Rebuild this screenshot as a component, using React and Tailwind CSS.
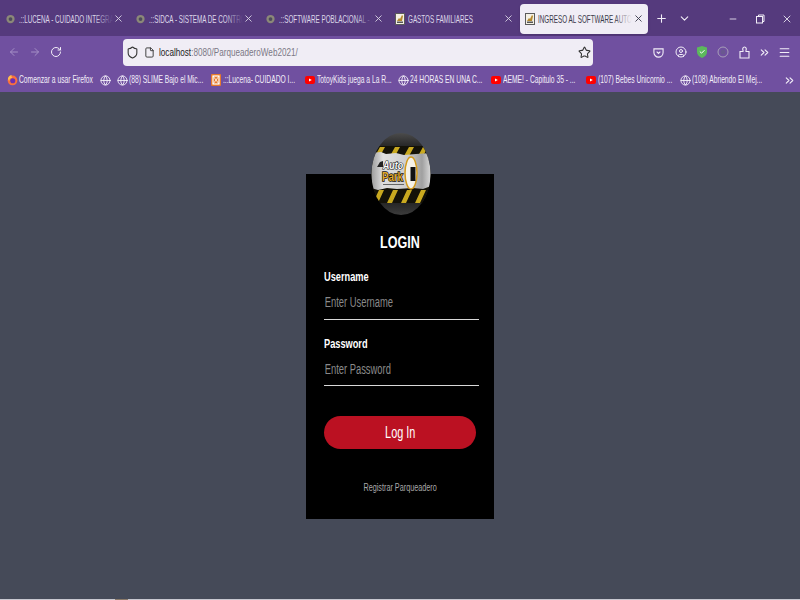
import React from "react";
import { ArrowLeft, ArrowRight, RotateCw, Shield, File, Star, X, Plus, ChevronDown, Minus, ChevronsRight, Menu, Globe, CircleUser } from "lucide-react";

const font = { fontFamily: '"Liberation Sans", Arial, sans-serif' };

const Sq = ({ children, className = "scale-x-[0.7]" }) => (
  <span className={"block whitespace-nowrap origin-left " + className}>{children}</span>
);

const GreyIcon = () => (
  <svg width="9" height="10" viewBox="0 0 12 12" className="shrink-0">
    <circle cx="6" cy="6" r="5.500" fill="#8b8878" />
    <circle cx="6" cy="6" r="2.500" fill="#4d4a5c" />
  </svg>
);

const PicIcon = () => (
  <svg width="10" height="12" viewBox="0 0 10 12" className="shrink-0">
    <rect x="0.500" y="0.500" width="9" height="11" fill="#f4f0e4" stroke="#5b5b5b" />
    <path d="M2 8l2-3 1 1 2-4 1 1-1 5z" fill="#b5892d" />
    <rect x="2" y="8.500" width="6" height="1.500" fill="#555" />
  </svg>
);

const YtIcon = () => (
  <svg width="10" height="10" viewBox="0 0 10 10" className="shrink-0">
    <rect x="0" y="1" width="10" height="8" rx="2" fill="#f00" />
    <path d="M4 3.400v3.200L6.800 5z" fill="#fff" />
  </svg>
);

const FoxIcon = () => (
  <svg width="11" height="12" viewBox="0 0 12 12" className="shrink-0">
    <circle cx="6" cy="6.500" r="5.300" fill="#f9703e" />
    <circle cx="6.300" cy="6.800" r="2.800" fill="#6b2fb3" />
    <path d="M1 4C2 1.500 4 .5 5 .5 4.600 2 5 3 6 3.600 4 3.600 2.600 4.600 2.600 7 1.600 6.400 1 5.200 1 4z" fill="#ffbd4f" />
  </svg>
);

const LucIcon = () => (
  <svg width="10" height="12" viewBox="0 0 10 12" className="shrink-0">
    <rect width="10" height="12" rx="1" fill="#e8792b" />
    <rect x="2" y="2" width="6" height="8" fill="none" stroke="#fff" strokeWidth="1.200" />
    <path d="M2 2l6 8M8 2l-6 8" stroke="#fff" strokeWidth="0.800" />
  </svg>
);

const Tab = ({ icon, title, fade, active, pic }) => (
  <div className={"relative flex items-center h-[30px] shrink-0 " + (active ? "w-[128px] bg-[#f0edf5] rounded-[4px] text-[#3a3a4a] shadow-sm" : "w-[130px] text-[#dcd6e8]")}>
    <div className={pic ? "ml-[5px] mr-[3px] w-[10px] flex shrink-0" : "ml-[6px] mr-[4px] w-[9px] flex shrink-0"}>{icon}</div>
    <div className="relative w-[94px] overflow-hidden text-[10.5px] h-[14px] leading-[14px]">
      <Sq className="scale-x-[0.6]">{title}</Sq>
      {fade && <div className={"absolute right-0 top-0 h-full w-[18px] bg-gradient-to-r " + fade} />}
    </div>
    <X size={11} className={"shrink-0 " + (pic ? "ml-[1px] " : "") + (active ? "text-[#3a3a4a]" : "text-[#d8d2e4]")} />
  </div>
);

const Bm = ({ icon, text, w }) => (
  <div className="flex items-center shrink-0" style={{ width: w }}>
    <div className="w-[12px] flex justify-start shrink-0">{icon}</div>
    {text && <span className="block w-0 text-[10.5px] text-[#f2eef8]"><Sq className="scale-x-[0.64]">{text}</Sq></span>}
  </div>
);

const G = () => <Globe size={11} className="text-[#f2eef8] shrink-0" />;

const Logo = () => (
  <svg viewBox="0 0 60 82" className="w-[60px] h-[82px]">
    <defs>
      <clipPath id="ov"><ellipse cx="30" cy="41" rx="29.500" ry="41" /></clipPath>
      <linearGradient id="metal" x1="0" x2="1" y1="0" y2="0">
        <stop offset="0" stopColor="#9a9a9a" />
        <stop offset="0.2" stopColor="#e0e0e0" />
        <stop offset="0.6" stopColor="#cdcdcd" />
        <stop offset="0.85" stopColor="#a0a0a0" />
        <stop offset="1" stopColor="#dadada" />
      </linearGradient>
      <linearGradient id="top" x1="0" x2="0" y1="0" y2="1">
        <stop offset="0" stopColor="#4b4b4b" />
        <stop offset="0.2" stopColor="#1e1e1e" />
        <stop offset="0.8" stopColor="#1e1e1e" />
        <stop offset="1" stopColor="#3c3c3c" />
      </linearGradient>
    </defs>
    <g clipPath="url(#ov)">
      <rect width="60" height="82" fill="url(#top)" />
      <rect y="13" width="60" height="57" fill="#141208" />
      <g fill="#c9a91f">
        <path d="M4 23l5-9h5l-5 9zM19 23l5-9h5l-5 9zM33 23l5-9h5l-5 9zM47 23l5-9h5l-5 9z" />
        <path d="M2 70l6-13h5l-6 13zM16 70l6-13h5l-6 13zM30 70l6-13h5l-6 13zM44 70l6-13h5l-6 13z" />
      </g>
      <path d="M0 20l10-1 5 2 10-1 8 2 12-1 15-1v33l-8 3-10-1-16 1-10-1-9 2-7-2z" fill="url(#metal)" />
      <path d="M6 34l3-5 3-1v6z" fill="#222" />
      <text x="12" y="36" fontSize="10" fontWeight="700" fill="#fff" stroke="#111" strokeWidth="1.200" paintOrder="stroke" fontStyle="italic" textLength="20" lengthAdjust="spacingAndGlyphs" style={font}>Auto</text>
      <text x="11" y="48" fontSize="12" fontWeight="700" fill="#e0a82a" stroke="#111" strokeWidth="1.500" paintOrder="stroke" textLength="21" lengthAdjust="spacingAndGlyphs" style={font}>Park</text>
      <ellipse cx="40" cy="40" rx="6" ry="16" fill="#f5f2e8" stroke="#d39b1c" strokeWidth="1.500" />
      <rect x="39.500" y="34" width="5" height="14" fill="#111" />
      <rect x="12" y="51" width="21" height="1" fill="#666" />
    </g>
  </svg>
);

export default function App() {
  return (
    <div className="w-[800px] h-[600px] overflow-hidden flex flex-col bg-[#454a58]" style={font}>
      {/* Tab strip */}
      <div className="h-[36px] bg-[#553a7d] flex items-center pt-[1px] shrink-0">
        <Tab icon={<GreyIcon />} title=".::LUCENA - CUIDADO INTEGRAL" fade="from-transparent to-[#553a7d]" />
        <Tab icon={<GreyIcon />} title=".::SIDCA - SISTEMA DE CONTROL" fade="from-transparent to-[#553a7d]" />
        <Tab icon={<GreyIcon />} title=".::SOFTWARE POBLACIONAL - SISTEMA" fade="from-transparent to-[#553a7d]" />
        <Tab icon={<PicIcon />} pic title="GASTOS FAMILIARES" />
        <Tab icon={<PicIcon />} pic title="INGRESO AL SOFTWARE AUTOPARK" fade="from-transparent to-[#f0edf5]" active />
        <Plus size={13} className="text-[#f2eef8] ml-[7px] shrink-0" />
        <ChevronDown size={13} className="text-[#f2eef8] ml-[10px] shrink-0" />
        <Minus size={10} className="text-[#f2eef8] ml-[37px] shrink-0" />
        <svg width="10" height="10" viewBox="0 0 10 10" className="ml-[17px] shrink-0 text-[#f2eef8]" fill="none" stroke="currentColor"><rect x="1.500" y="2.500" width="6" height="6.500" /><path d="M3.500 2.500V1H9v6.500H7.500" /></svg>
        <X size={12} className="text-[#d8d2e4] ml-[16px] shrink-0" />
      </div>

      {/* Nav bar */}
      <div className="h-[32px] bg-[#7050a0] flex items-center shrink-0">
        <ArrowLeft size={12} className="text-[#a48fc6] ml-[8px]" />
        <ArrowRight size={12} className="text-[#a48fc6] ml-[9px]" />
        <RotateCw size={12} className="text-[#f2eef8] ml-[9px]" />
        <div className="ml-[61px] w-[470px] h-[27px] bg-[#f0edf5] rounded-[4px] flex items-center text-[#2a2a3a]">
          <Shield size={13} className="ml-[3px] text-[#333]" />
          <File size={11} className="ml-[5px] text-[#333]" />
          <div className="ml-[4px] text-[11px] w-[200px]">
            <Sq className="scale-x-[0.74]">
              <span className="text-[#222]">localhost</span>
              <span className="text-[#7b7885]">:8080/ParqueaderoWeb2021/</span>
            </Sq>
          </div>
          <Star size={13} className="ml-auto mr-[2px] text-[#333]" />
        </div>
        <svg width="11" height="11" viewBox="0 0 12 12" className="ml-[60px] shrink-0" fill="none" stroke="#f2eef8" strokeWidth="1.200"><path d="M1 2h10v4a5 5 0 0 1-10 0z" /><path d="M4 5l2 2 2-2" /></svg>
        <CircleUser size={12} className="text-[#f2eef8] ml-[11px]" />
        <svg width="12" height="14" viewBox="0 0 12 13" className="ml-[9px] shrink-0"><path d="M6 .5l5 1.600v4.400C11 9.500 8.500 11.500 6 12.500 3.500 11.500 1 9.500 1 6.500V2.100z" fill="#5cb85c" /><path d="M3.800 6l1.700 1.700 3-3" stroke="#fff" fill="none" /></svg>
        <svg width="12" height="12" viewBox="0 0 12 12" className="ml-[9px] shrink-0" fill="none"><circle cx="6" cy="6" r="5" stroke="#a8a0b8" /><circle cx="6" cy="6" r="2.500" fill="#6a5890" /></svg>
        <svg width="11" height="13" viewBox="0 0 11 13" className="ml-[10px] shrink-0" fill="none" stroke="#f2eef8" strokeWidth="1.100"><path d="M1 5.500h3V4.200C3.300 3.300 3.800 1 5.500 1S7.700 3.300 7 4.200v1.300h3V12H1z" /></svg>
        <ChevronsRight size={13} className="text-[#f2eef8] ml-[8px]" />
        <Menu size={13} className="text-[#f2eef8] ml-[7px]" />
      </div>

      {/* Bookmarks */}
      <div className="h-[24px] bg-[#7050a0] flex items-center pl-[7px] shrink-0">
        <Bm icon={<FoxIcon />} text="Comenzar a usar Firefox" w={93} />
        <Bm icon={<G />} w={17} />
        <Bm icon={<G />} text="(88) SLIME Bajo el Mic..." w={94} />
        <Bm icon={<LucIcon />} text=".::Lucena- CUIDADO I..." w={94} />
        <Bm icon={<YtIcon />} text="TotoyKids juega a La R..." w={93} />
        <Bm icon={<G />} text="24 HORAS EN UNA C..." w={93} />
        <Bm icon={<YtIcon />} text="AEME! - Capitulo 35 - ..." w={95} />
        <Bm icon={<YtIcon />} text="(107) Bebes Unicornio ..." w={94} />
        <Bm icon={<G />} text="(108) Abriendo El Mej..." w={97} />
        <ChevronsRight size={13} className="text-[#f2eef8] ml-[6px]" />
      </div>

      {/* Page */}
      <div className="flex-1 flex justify-center items-start pt-[82px]">
        <div className="relative w-[188px] h-[345px] bg-black flex flex-col text-white pl-[18px]">
          <div className="absolute left-[65px] top-[-41px]">
            <Logo />
          </div>
          <h1 className="mt-[59px] ml-[-18px] text-center text-[17px] leading-[20px] font-bold">
            <span className="inline-block scale-x-[0.74]">LOGIN</span>
          </h1>
          <label className="mt-[16px] text-[13px] leading-[16px] font-bold block"><Sq className="scale-x-[0.71]">Username</Sq></label>
          <div className="mt-[1px] h-[34px] w-[155px] border-b border-b-[#d8d8d8] overflow-hidden">
            <input placeholder="Enter Username" className="w-[230px] h-[31px] pl-[1px] bg-transparent outline-none text-[14px] origin-left scale-x-[0.67] placeholder:text-[#8a8a8a]" />
          </div>
          <label className="mt-[16px] text-[13px] leading-[16px] font-bold block"><Sq className="scale-x-[0.71]">Password</Sq></label>
          <div className="mt-[0px] h-[34px] w-[155px] border-b border-b-[#d8d8d8] overflow-hidden">
            <input type="password" placeholder="Enter Password" className="w-[230px] h-[33px] pl-[1px] bg-transparent outline-none text-[14px] origin-left scale-x-[0.67] placeholder:text-[#8a8a8a]" />
          </div>
          <button className="mt-[30px] w-[152px] h-[33px] rounded-full bg-[#bb1122] text-white text-[16px]">
            <span className="inline-block scale-x-[0.68]">Log In</span>
          </button>
          <a className="mt-[32px] ml-[-18px] text-center text-[10.5px] leading-[12px] text-[#a8a8a8]">
            <span className="inline-block scale-x-[0.69] whitespace-nowrap">Registrar Parqueadero</span>
          </a>
        </div>
      </div>
      <div className="h-[1px] bg-[#c8c8d0] shrink-0 flex">
        <div className="ml-[115px] w-[13px] bg-[#8a7a6a]" />
      </div>
    </div>
  );
}
